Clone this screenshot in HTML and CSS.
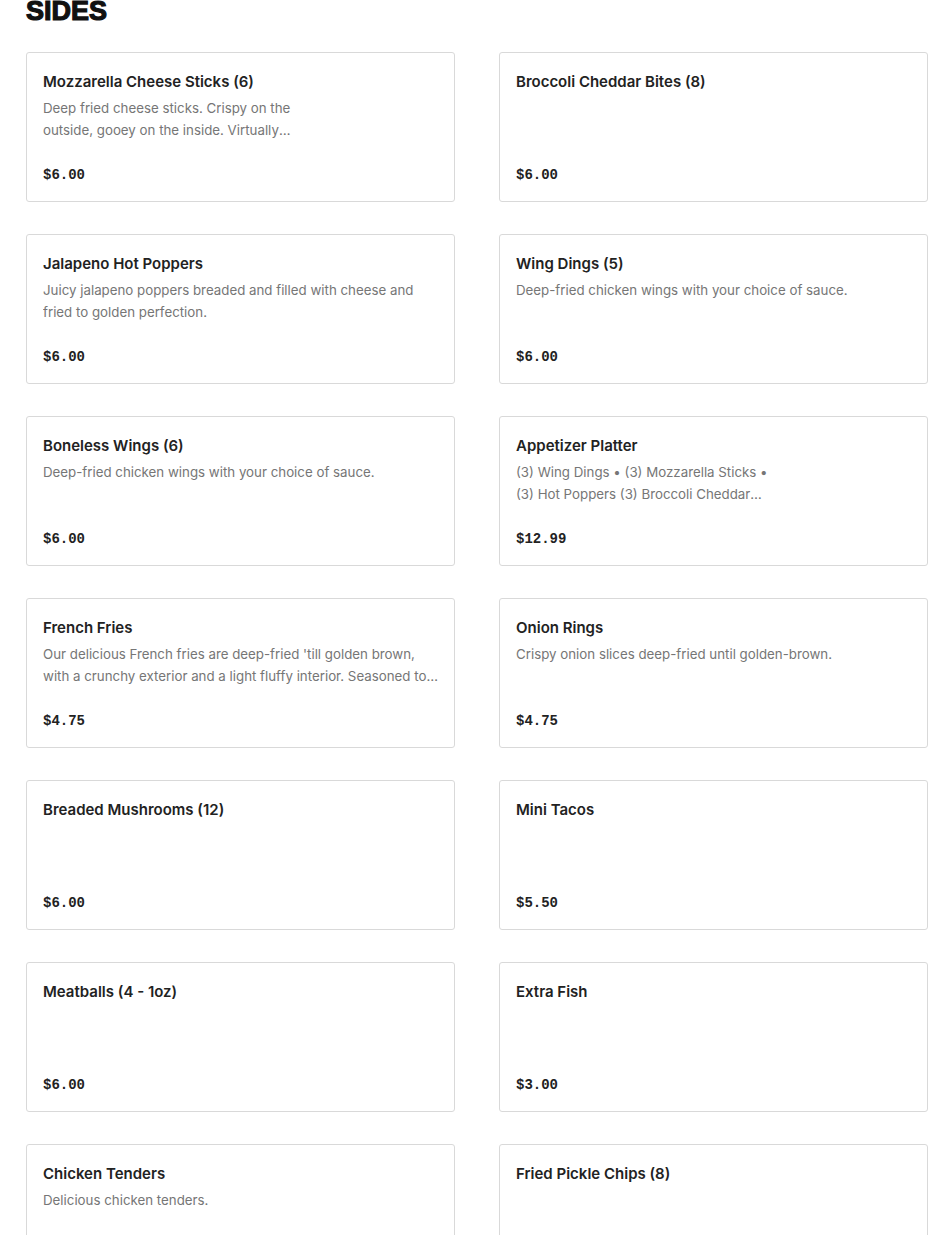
FILE: index.html
```html
<!DOCTYPE html>
<html lang="en">
<head>
  <meta charset="UTF-8">
  <title>Sides</title>
  <link rel="stylesheet" href="styles.css">
</head>
<body>
  <section class="menu-section">
    <h2 class="section-title">SIDES</h2>
    <div class="item-grid">
      <div class="item">
        <h3 class="item-name">Mozzarella Cheese Sticks (6)</h3>
        <p class="item-desc narrow">Deep fried cheese sticks. Crispy on the outside, gooey on the inside. Virtually irresistible with our marinara sauce.</p>
        <div class="item-price">$6.00</div>
      </div>
      <div class="item">
        <h3 class="item-name">Broccoli Cheddar Bites (8)</h3>
        <p class="item-desc"></p>
        <div class="item-price">$6.00</div>
      </div>
      <div class="item">
        <h3 class="item-name">Jalapeno Hot Poppers</h3>
        <p class="item-desc">Juicy jalapeno poppers breaded and filled with cheese and fried to golden perfection.</p>
        <div class="item-price">$6.00</div>
      </div>
      <div class="item">
        <h3 class="item-name">Wing Dings (5)</h3>
        <p class="item-desc">Deep-fried chicken wings with your choice of sauce.</p>
        <div class="item-price">$6.00</div>
      </div>
      <div class="item">
        <h3 class="item-name">Boneless Wings (6)</h3>
        <p class="item-desc">Deep-fried chicken wings with your choice of sauce.</p>
        <div class="item-price">$6.00</div>
      </div>
      <div class="item">
        <h3 class="item-name">Appetizer Platter</h3>
        <p class="item-desc narrow">(3) Wing Dings &bull; (3) Mozzarella Sticks &bull; (3) Hot Poppers (3) Broccoli Cheddar Bites &bull; (3) Onion Rings</p>
        <div class="item-price">$12.99</div>
      </div>
      <div class="item">
        <h3 class="item-name">French Fries</h3>
        <p class="item-desc">Our delicious French fries are deep-fried 'till golden brown, with a crunchy exterior and a light fluffy interior. Seasoned to perfection.</p>
        <div class="item-price">$4.75</div>
      </div>
      <div class="item">
        <h3 class="item-name">Onion Rings</h3>
        <p class="item-desc">Crispy onion slices deep-fried until golden-brown.</p>
        <div class="item-price">$4.75</div>
      </div>
      <div class="item">
        <h3 class="item-name">Breaded Mushrooms (12)</h3>
        <p class="item-desc"></p>
        <div class="item-price">$6.00</div>
      </div>
      <div class="item">
        <h3 class="item-name">Mini Tacos</h3>
        <p class="item-desc"></p>
        <div class="item-price">$5.50</div>
      </div>
      <div class="item">
        <h3 class="item-name">Meatballs (4 - 1oz)</h3>
        <p class="item-desc"></p>
        <div class="item-price">$6.00</div>
      </div>
      <div class="item">
        <h3 class="item-name">Extra Fish</h3>
        <p class="item-desc"></p>
        <div class="item-price">$3.00</div>
      </div>
      <div class="item">
        <h3 class="item-name">Chicken Tenders</h3>
        <p class="item-desc">Delicious chicken tenders.</p>
        <div class="item-price">$6.00</div>
      </div>
      <div class="item">
        <h3 class="item-name">Fried Pickle Chips (8)</h3>
        <p class="item-desc"></p>
        <div class="item-price">$6.00</div>
      </div>
    </div>
  </section>
</body>
</html>
```

FILE: styles.css
```css
body {
  margin: 0;
  font-family: Inter, "Liberation Sans", sans-serif;
  background: #fff;
  color: #222;
}
.menu-section {
  padding: 0 22px 40px 26px;
}
.section-title {
  margin: -8px 0 22px;
  font-family: "Liberation Sans", Arial, sans-serif;
  font-size: 27px;
  font-weight: 900;
  line-height: 38px;
  color: #111;
  -webkit-text-stroke: 1.2px #111;
}
.item-grid {
  display: grid;
  grid-template-columns: repeat(2, 1fr);
  column-gap: 44px;
  row-gap: 32px;
}
.item {
  display: flex;
  flex-direction: column;
  height: 150px;
  box-sizing: border-box;
  padding: 17px 16px 17px 16px;
  border: 1px solid #d9d9d9;
  border-radius: 3px;
}
.item-name {
  margin: 0 0 3px;
  font-size: 15px;
  font-weight: 600;
  line-height: 24px;
  color: #222;
}
.item-desc {
  margin: 0;
  font-size: 13.3px;
  line-height: 22px;
  color: #767676;
  display: -webkit-box;
  -webkit-line-clamp: 2;
  -webkit-box-orient: vertical;
  overflow: hidden;
}
.item-desc.narrow {
  max-width: 258px;
}
.item-price {
  margin-top: auto;
  font-family: "Liberation Mono", monospace;
  font-size: 14px;
  font-weight: 700;
  line-height: 18px;
  color: #222;
}
```
